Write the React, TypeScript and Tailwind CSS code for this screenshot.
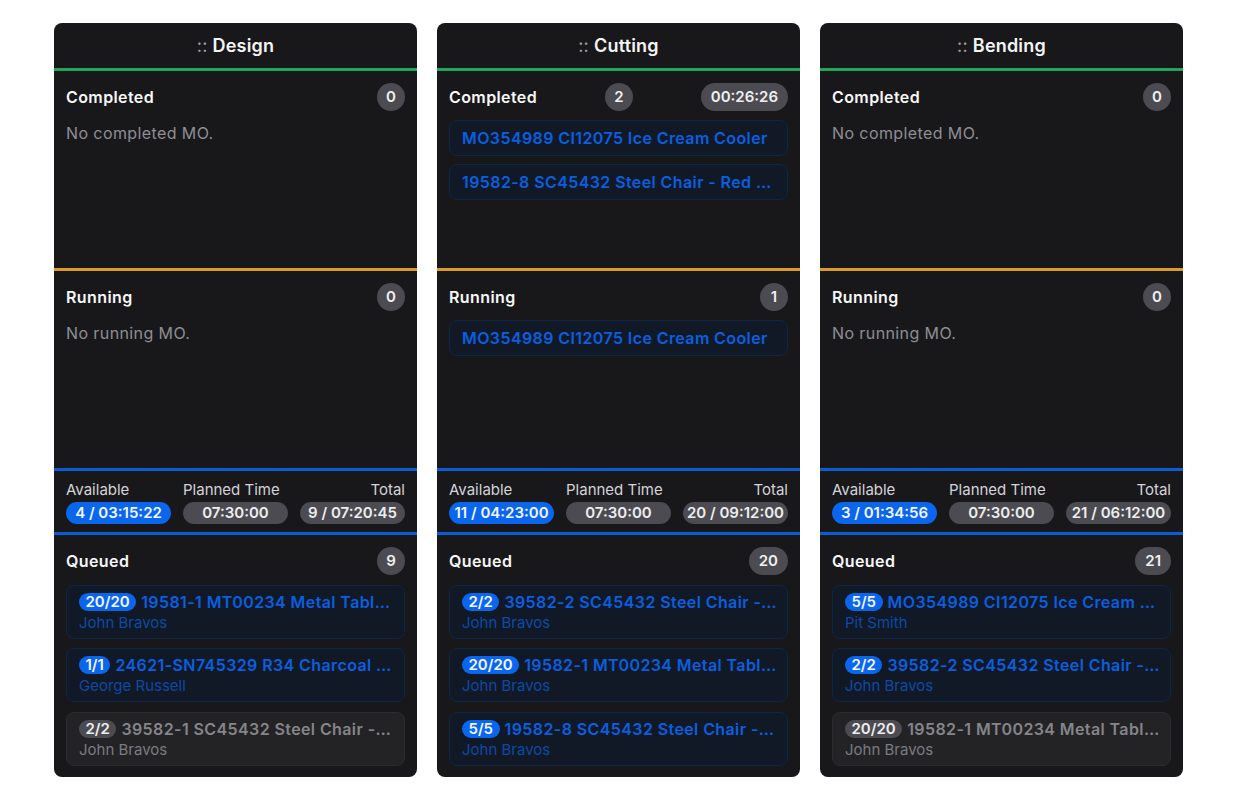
const font = { fontFamily: "Inter, 'Liberation Sans', sans-serif" };

type Q = { badge: string; title: string; who: string; gray?: boolean };
type Col = {
  name: string;
  completed: string[];
  completedTime?: string;
  running: string[];
  avail: string;
  total: string;
  queued: string;
  items: Q[];
};

const cols: Col[] = [
  {
    name: "Design",
    completed: [],
    running: [],
    avail: "4 / 03:15:22",
    total: "9 / 07:20:45",
    queued: "9",
    items: [
      { badge: "20/20", title: "19581-1 MT00234 Metal Table - Black", who: "John Bravos" },
      { badge: "1/1", title: "24621-SN745329 R34 Charcoal Smoker Grill", who: "George Russell" },
      { badge: "2/2", title: "39582-1 SC45432 Steel Chair - Blue Color", who: "John Bravos", gray: true },
    ],
  },
  {
    name: "Cutting",
    completed: ["MO354989 CI12075 Ice Cream Cooler", "19582-8 SC45432 Steel Chair - Red Color"],
    completedTime: "00:26:26",
    running: ["MO354989 CI12075 Ice Cream Cooler"],
    avail: "11 / 04:23:00",
    total: "20 / 09:12:00",
    queued: "20",
    items: [
      { badge: "2/2", title: "39582-2 SC45432 Steel Chair - Green Color", who: "John Bravos" },
      { badge: "20/20", title: "19582-1 MT00234 Metal Table - Black", who: "John Bravos" },
      { badge: "5/5", title: "19582-8 SC45432 Steel Chair - Red Color", who: "John Bravos" },
    ],
  },
  {
    name: "Bending",
    completed: [],
    running: [],
    avail: "3 / 01:34:56",
    total: "21 / 06:12:00",
    queued: "21",
    items: [
      { badge: "5/5", title: "MO354989 CI12075 Ice Cream Cooler Large", who: "Pit Smith" },
      { badge: "2/2", title: "39582-2 SC45432 Steel Chair - Green Color", who: "John Bravos" },
      { badge: "20/20", title: "19582-1 MT00234 Metal Table - Black", who: "John Bravos", gray: true },
    ],
  },
];

function Count({ children }: { children: string }) {
  return (
    <span
      className={
        children.length > 1
          ? "flex h-7 items-center justify-center rounded-full bg-[#4b4b51] px-[10px] text-[15px] font-semibold text-[#f0f0f0]"
          : "flex h-7 w-7 items-center justify-center rounded-full bg-[#4b4b51] text-[15px] font-semibold text-[#f0f0f0]"
      }
    >
      {children}
    </span>
  );
}

function Head({ label, count, time }: { label: string; count: string; time?: string }) {
  return (
    <div className="flex h-7 items-center justify-between">
      <span className="text-[16px] font-semibold tracking-wide text-[#f7f7f7]">{label}</span>
      <Count>{count}</Count>
      {time ? <Count>{time}</Count> : null}
    </div>
  );
}

function Simple({ text }: { text: string }) {
  return (
    <div className="flex h-9 items-center rounded-lg border border-[#0d2647] bg-[#111927] px-3 text-[16px] font-semibold tracking-wide text-[#0a5fe0]">
      <span className="truncate">{text}</span>
    </div>
  );
}

function Section({
  label,
  count,
  time,
  empty,
  items,
}: {
  label: string;
  count: string;
  time?: string;
  empty: string;
  items: string[];
}) {
  return (
    <div className="h-[197px] px-3 pt-3">
      <Head label={label} count={count} time={time} />
      {items.length === 0 ? (
        <p className="mt-[10px] text-[16px] leading-6 tracking-wide text-[#8e8e93]">{empty}</p>
      ) : (
        <div className="mt-[9px] flex flex-col gap-2">
          {items.map((t) => (
            <Simple key={t} text={t} />
          ))}
        </div>
      )}
    </div>
  );
}

function QueueCard({ q }: { q: Q }) {
  return (
    <div
      className={
        q.gray
          ? "h-[54px] rounded-lg border border-[#2c2c30] bg-[#232326] pt-[5px] pr-[10px] pl-3 last:mt-px"
          : "h-[54px] rounded-lg border border-[#0d2647] bg-[#111927] pt-[5px] pr-[10px] pl-3 last:mt-px"
      }
    >
      <div
        className={
          q.gray
            ? "truncate text-[16px] leading-[22px] font-semibold tracking-wide text-[#85858a]"
            : "truncate text-[16px] leading-[22px] font-semibold tracking-wide text-[#0a5fe0]"
        }
      >
        <span
          className={
            q.gray
              ? "mr-[5px] inline-block h-[18px] rounded-full bg-[#4b4b51] px-[6.5px] align-[1px] text-[15px] leading-[18px] tracking-normal text-[#eeeeee]"
              : "mr-[5px] inline-block h-[18px] rounded-full bg-[#0b66ee] px-[6.5px] align-[1px] text-[15px] leading-[18px] tracking-normal text-[#f2f6ff]"
          }
        >
          {q.badge}
        </span>
        {q.title}
      </div>
      <div
        className={
          q.gray
            ? "text-[15px] leading-[19px] text-[#7b7b80]"
            : "text-[15px] leading-[19px] text-[#0c4aa6]"
        }
      >
        {q.who}
      </div>
    </div>
  );
}

function Stat({
  label,
  value,
  blue,
  right,
}: {
  label: string;
  value: string;
  blue?: boolean;
  right?: boolean;
}) {
  return (
    <div className="flex flex-col gap-[2px]">
      <span
        className={
          right
            ? "text-right text-[15px] leading-[20px] text-[#d4d4d8]"
            : "text-left text-[15px] leading-[20px] text-[#d4d4d8]"
        }
      >
        {label}
      </span>
      <span
        className={
          blue
            ? "flex h-[22px] items-center justify-center rounded-full bg-[#0b66ee] text-[15px] font-semibold whitespace-nowrap text-[#f2f6ff]"
            : "flex h-[22px] items-center justify-center rounded-full bg-[#4b4b51] text-[15px] font-semibold whitespace-nowrap text-[#eeeeee]"
        }
      >
        {value}
      </span>
    </div>
  );
}

function Column({ c }: { c: Col }) {
  return (
    <div className="h-[754px] w-[363px] shrink-0 overflow-hidden rounded-lg bg-[#18181b]">
      <div className="flex h-[45px] items-center justify-center text-[18px] font-semibold tracking-[0.2px] text-[#f4f4f5]">
        <span className="mr-[5px] font-normal text-[#a1a1aa]">::</span>
        {c.name}
      </div>
      <div className="h-[3px] bg-[#22a55b]" />
      <Section
        label="Completed"
        count={String(c.completed.length)}
        time={c.completedTime}
        empty="No completed MO."
        items={c.completed}
      />
      <div className="h-[3px] bg-[#dd9a2b]" />
      <Section
        label="Running"
        count={String(c.running.length)}
        empty="No running MO."
        items={c.running}
      />
      <div className="h-[3px] bg-[#0a5cd8]" />
      <div className="grid h-[61px] grid-cols-3 gap-3 px-3 pt-[9px]">
        <Stat label="Available" value={c.avail} blue />
        <Stat label="Planned Time" value="07:30:00" />
        <Stat label="Total" value={c.total} right />
      </div>
      <div className="h-[3px] bg-[#0a5cd8]" />
      <div className="px-3 pt-3">
        <Head label="Queued" count={c.queued} />
        <div className="mt-[10px] flex flex-col gap-[9px]">
          {c.items.map((q) => (
            <QueueCard key={q.badge + q.title} q={q} />
          ))}
        </div>
      </div>
    </div>
  );
}

export default function App() {
  return (
    <div style={font} className="flex h-[800px] gap-5 bg-white pt-[23px] pl-[54px]">
      {cols.map((c) => (
        <Column key={c.name} c={c} />
      ))}
    </div>
  );
}
